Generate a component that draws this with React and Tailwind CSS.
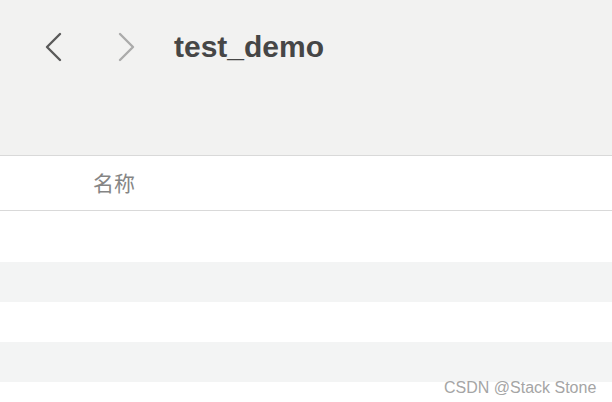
import React from "react";

const Chevron = ({ dir, color }) => (
  <svg width="18" height="30" viewBox="0 0 18 30" fill="none">
    <path
      d={dir === "left" ? "M16 2 L3 15 L16 28" : "M2 2 L15 15 L2 28"}
      stroke={color}
      strokeWidth="2.4"
      strokeLinecap="round"
      strokeLinejoin="round"
    />
  </svg>
);

const rows = ["bg-white h-[51px]", "bg-[#f3f4f4] h-[40px]", "bg-white h-[40px]", "bg-[#f3f4f4] h-[40px]", "bg-white h-[40px]"];

export default function App() {
  return (
    <div
      className="relative w-[612px] h-[402px] overflow-hidden bg-white"
      style={{ fontFamily: '"Liberation Sans", "Noto Sans CJK SC", sans-serif' }}
    >
      <div className="h-[156px] bg-[#f2f2f1] border-b border-[#d9d9d9]">
        <div className="flex items-center h-[94px] pl-[44px]">
          <Chevron dir="left" color="#5a5a5a" />
          <div className="w-[56px]" />
          <Chevron dir="right" color="#ababab" />
          <div className="ml-[38px] text-[30px] font-bold text-[#464646] leading-none">test_demo</div>
        </div>
      </div>
      <div className="h-[55px] border-b border-[#d9d9d9] flex items-center pl-[93px]">
        <span
          className="text-[21px] text-[#858585]"
          style={{ fontFamily: '"Noto Sans CJK SC", sans-serif' }}
        >
          名称
        </span>
      </div>
      {rows.map((r, i) => (
        <div key={i} className={r} />
      ))}
      <div className="absolute left-[444px] top-[376px] text-[16px] text-[#a5a5a5]">CSDN @Stack Stone</div>
    </div>
  );
}
